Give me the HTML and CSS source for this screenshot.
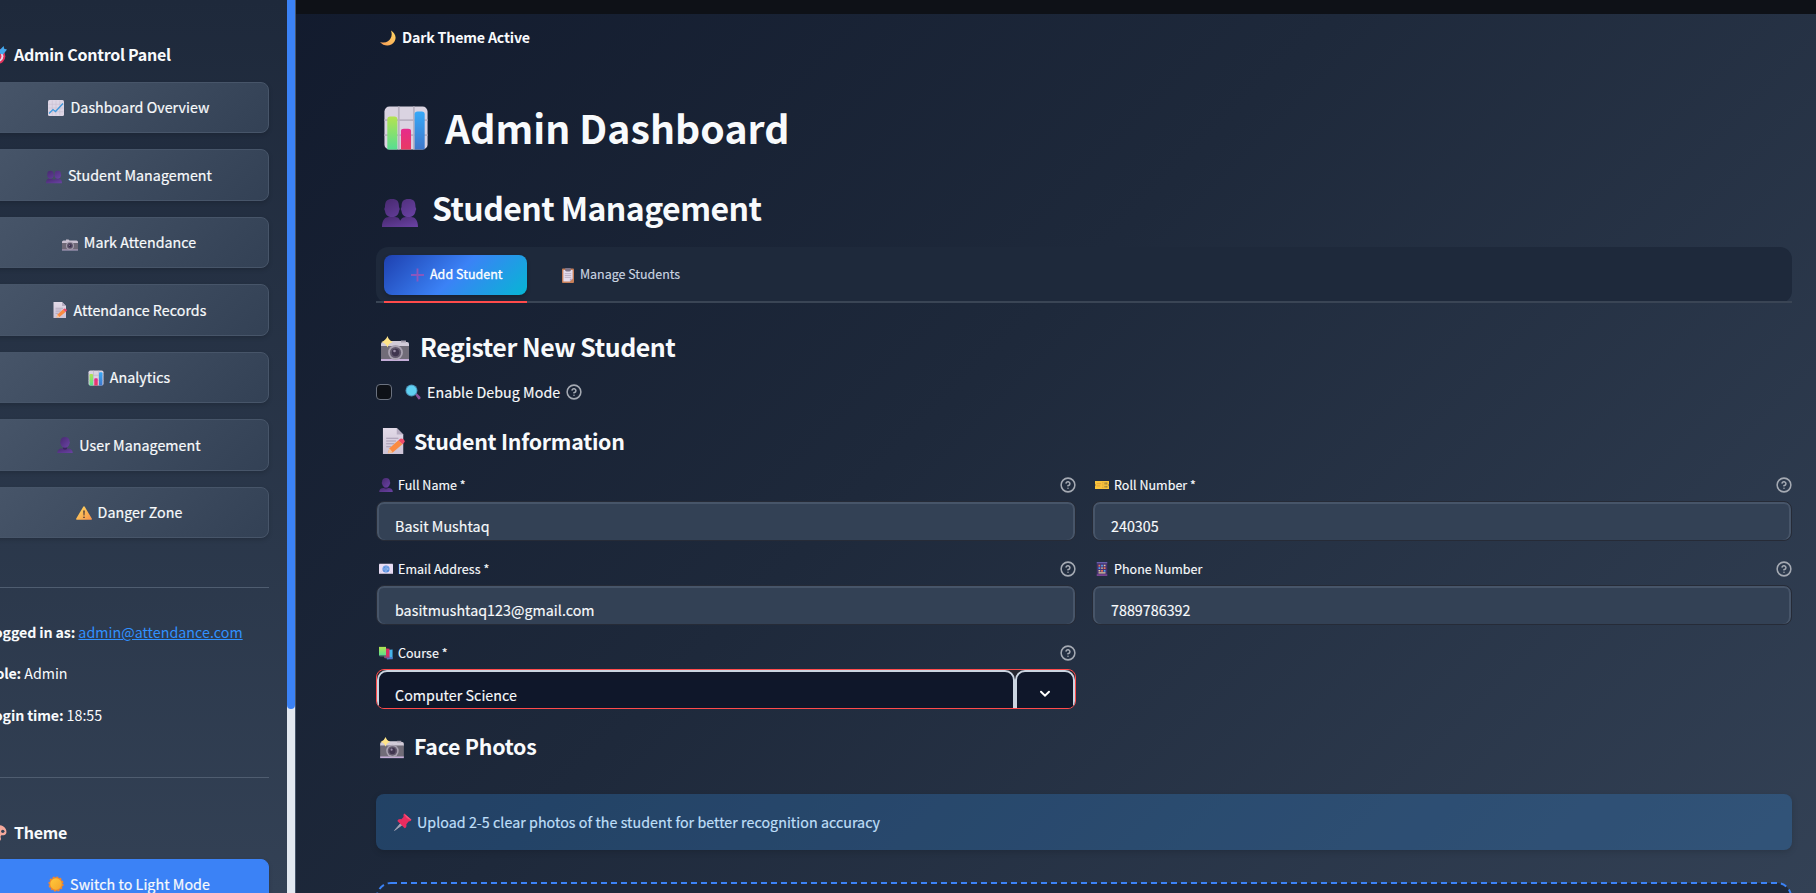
FILE: index.html
```html
<!DOCTYPE html>
<html lang="en">
<head>
<meta charset="utf-8">
<title>Admin Dashboard</title>
<link rel="stylesheet" href="styles.css">
</head>
<body>
<svg class="defs" width="0" height="0" aria-hidden="true">
  <defs>
    <linearGradient id="g-green" x1="0" y1="0" x2="0" y2="1"><stop offset="0" stop-color="#b4e34f"/><stop offset="1" stop-color="#56de92"/></linearGradient>
    <linearGradient id="g-pink" x1="0" y1="0" x2="0" y2="1"><stop offset="0" stop-color="#e62b8c"/><stop offset="1" stop-color="#e83a62"/></linearGradient>
    <linearGradient id="g-blue" x1="0" y1="0" x2="0" y2="1"><stop offset="0" stop-color="#37a9f8"/><stop offset="1" stop-color="#3f77cb"/></linearGradient>
    <linearGradient id="g-paper" x1="0" y1="0" x2="0" y2="1"><stop offset="0" stop-color="#e2dae8"/><stop offset="1" stop-color="#cdc3d6"/></linearGradient>
    <linearGradient id="g-purple" x1="0" y1="0" x2="1" y2="1"><stop offset="0" stop-color="#47296f"/><stop offset="1" stop-color="#6b43a5"/></linearGradient>
    <linearGradient id="g-gold" x1="0" y1="0" x2="1" y2="1"><stop offset="0" stop-color="#ffdd60"/><stop offset="1" stop-color="#f8934c"/></linearGradient>
    <linearGradient id="g-sun" x1="0" y1="0" x2="1" y2="1"><stop offset="0" stop-color="#ffc93a"/><stop offset="1" stop-color="#f5a52c"/></linearGradient>
    <linearGradient id="g-moon" x1="1" y1="0" x2="0" y2="1"><stop offset="0" stop-color="#ffd862"/><stop offset="1" stop-color="#f79b55"/></linearGradient>
    <symbol id="bars" viewBox="0 0 32 32">
      <rect x="1" y="1" width="30" height="30" rx="3.5" fill="#dad3e1"/>
      <path d="M11 1v30M21.500 1v30M1 10.500h30M1 21h30" stroke="#b9b1c1" stroke-width="1.200"/>
      <path d="M3 31V10q0-2 2-2h3q2 0 2 2v21z" fill="url(#g-green)"/>
      <path d="M12.500 31V18q0-1.500 2-1.500h3q2 0 2 1.500v13z" fill="url(#g-pink)"/>
      <path d="M22 31V6.500q0-2 2-2h3q2 0 2 2V31z" fill="url(#g-blue)"/>
    </symbol>
    <symbol id="trend" viewBox="0 0 32 32">
      <rect x="0" y="0" width="32" height="32" rx="3" fill="#ded6e5"/>
      <path d="M8.500 1v30M16 1v30M23.500 1v30M1 8.500h30M1 16h30M1 23.500h30" stroke="#c3b9cd" stroke-width="1"/>
      <path d="M2 27l8-8 5 4L30 7" fill="none" stroke="#3f98dc" stroke-width="2.600"/>
    </symbol>
    <symbol id="person" viewBox="0 0 32 32">
      <path d="M.5 32c0-6 4-9 9-9h13c5 0 9 3 9 9z" fill="url(#g-purple)"/>
      <path d="M12 18h8v6q-4 3-8 0z" fill="#3c2361"/>
      <path d="M7 9C7 3 10 0 16 0s9 3 9 9q2 2 0 4c-1 5-4 8.500-9 8.500S8 18 7 13q-2-2 0-4z" fill="url(#g-purple)"/>
    </symbol>
    <symbol id="people" viewBox="0 0 36 28">
      <path d="M0 28c0-7 3-10 7-10h6c4 0 6 3 6 10zM17 28c0-7 3-10 7-10h5c4 0 7 3 7 10z" fill="url(#g-purple)"/>
      <path d="M3 8c0-6 2-8 7-8s7 2 7 8q1.500 2 0 4c-.6 4-3 6-7 6s-6.400-2-7-6q-1.500-2 0-4zM19.500 8c0-6 2-8 7-8s7 2 7 8q1.500 2 0 4c-.6 4-3 6-7 6s-6.400-2-7-6q-1.500-2 0-4z" fill="url(#g-purple)"/>
    </symbol>
    <symbol id="camera" viewBox="0 0 32 24">
      <path d="M3 3h5V1h5l2 2h14q3 0 3 3v3H0V6q0-3 3-3z" fill="#c9c0d0"/>
      <path d="M0 8h32v14H0z" fill="#6e6876"/><path d="M0 21h32v2H0z" fill="#b9a9ca"/>
      <circle cx="16" cy="13.500" r="8" fill="#a69dae"/><circle cx="16" cy="13.500" r="5.800" fill="#5a5266"/><circle cx="16" cy="13.500" r="3" fill="#3c3050"/><circle cx="15" cy="12.500" r="1.200" fill="#93829f"/>
    </symbol>
    <symbol id="flash" viewBox="0 0 30 26">
      <path d="M3 6h5V5h16v1h3q2 0 2 2v3H1V8q0-2 2-2z" fill="#d2cbd8"/><path d="M21 4.500h5v2h-5z" fill="#a79fae"/>
      <path d="M1 10h28v14H1z" fill="#716c78"/><path d="M1 23h28v2H1z" fill="#c4add7"/>
      <circle cx="15.500" cy="16.500" r="7.400" fill="#aaa2b1"/><circle cx="15.500" cy="16.500" r="5.600" fill="#62596d"/><circle cx="15.500" cy="16.500" r="3.700" fill="#40354f"/><circle cx="14.500" cy="15" r="1.300" fill="#9c8fa9"/>
      <path d="M7.500 0q1 4 5.500 6-4.500 1-5.500 5.500Q6 7 1.500 6 6 4 7.500 0z" fill="#ffe488"/>
    </symbol>
    <symbol id="memo" viewBox="0 0 28 32">
      <path d="M1 0h17l8 8v24H1z" fill="url(#g-paper)"/><path d="M18 0l8 8h-8z" fill="#b6acc1"/>
      <path d="M5 12.500h15M5 16h12M5 19.500h10M5 23h6" stroke="#a79bb2" stroke-width="1.300"/>
      <path d="M7 31l2-6L20 15l5 5L13 30z" fill="#fb8b42"/><path d="M20 15l3-2q4 0 5 4l-3 3z" fill="#ef4c6b"/><path d="M7 31l2-6 4 5z" fill="#f3c39b"/>
    </symbol>
    <symbol id="warn" viewBox="0 0 32 28">
      <path d="M14.500 1.500q1.500-2 3 0L31.500 25q1 2-1 2.500h-29q-2-.5-1-2.500z" fill="url(#g-gold)"/>
      <path d="M14.500 9h3l-.5 10h-2z" fill="#4d3a39"/><circle cx="16" cy="22.500" r="1.700" fill="#4d3a39"/>
    </symbol>
    <symbol id="target" viewBox="0 0 32 32">
      <circle cx="15" cy="18" r="14" fill="#e2325c"/><circle cx="15" cy="18" r="10.500" fill="#e6dcec"/><circle cx="15" cy="18" r="7" fill="#e2325c"/><circle cx="15" cy="18" r="3" fill="#e6dcec"/>
      <path d="M15 18L26 7" stroke="#3779b8" stroke-width="2"/><path d="M18 8l8-8 1 5 5 1-7 9-6-2z" fill="#45a8ee"/>
    </symbol>
    <symbol id="palette" viewBox="0 0 32 32">
      <path d="M16 2c9 0 15 5 15 12 0 6-6 6-8 6s-3 2-2 5-1 6-5 6C7 31 1 25 1 16S8 2 16 2z" fill="#f5a99c"/><circle cx="24.500" cy="13" r="3" fill="#344256"/><circle cx="9" cy="12" r="3" fill="#4aa3ed"/>
    </symbol>
    <symbol id="sun" viewBox="0 0 32 32">
      <circle cx="16" cy="16" r="13.500" fill="#f0872f" stroke="#f0872f" stroke-width="3.500" stroke-dasharray="4 3.070"/><circle cx="16" cy="16" r="11.500" fill="url(#g-sun)"/>
    </symbol>
    <symbol id="moon" viewBox="0 0 32 32"><path d="M22 1c8 5 12 14 7 22-6 10-21 11-29 1 11 3 18-1 21-7 3-5 3-10 1-16z" fill="url(#g-moon)"/></symbol>
    <symbol id="plus" viewBox="0 0 28 28"><path d="M12 0h4v12h12v4H16v12h-4V16H0v-4h12z" fill="#8a57bd"/></symbol>
    <symbol id="clip" viewBox="0 0 26 32">
      <rect x="0" y="1" width="26" height="31" rx="2" fill="#c77e58"/><path d="M3 4h20v19l-6 6H3z" fill="#e4dced"/><path d="M23 23l-6 6v-6z" fill="#b3a5c4"/>
      <path d="M7 0h12v6q-6 3-12 0z" fill="#7d7488"/><path d="M6 12h14M6 16h14M6 20h14" stroke="#aaa0b5" stroke-width="1.500"/>
    </symbol>
    <symbol id="lens" viewBox="0 0 32 32"><path d="M20 21l3-3 8 8q1 4-4 5z" fill="#8b5398"/><circle cx="13" cy="13" r="12" fill="#4a8fb4"/><circle cx="13" cy="13" r="10" fill="#5fd0f2"/></symbol>
    <symbol id="mail" viewBox="0 0 32 24"><rect width="32" height="23" rx="1" fill="#e9ddf4"/><path d="M0 23l10-9M32 23l-10-9" stroke="#cfc0de"/><circle cx="16" cy="12" r="8" fill="#4b86db"/><circle cx="16" cy="12" r="3" fill="none" stroke="#b7d2f5" stroke-width="1.500"/><path d="M19 9v4q1 3 3 0v-2a6 6 0 1 0-3 6" fill="none" stroke="#b7d2f5" stroke-width="1"/></symbol>
    <symbol id="books" viewBox="0 0 32 30"><path d="M18 8l13-1v21l-13 1z" fill="#45b4ec"/><path d="M18 25l13-1v5H18z" fill="#4b78cb"/><path d="M10 4l14 1v19l-12 1z" fill="#d92f62"/><path d="M11 23h13v4H13z" fill="#8d4c83"/><path d="M0 1h16v20H0z" fill="url(#g-green)"/><path d="M0 20h16v3H2z" fill="#4e7b6f"/></symbol>
    <symbol id="ticket" viewBox="0 0 32 20"><path d="M0 1h32v6q-2 3 0 6v6H0v-6q2-3 0-6z" fill="#fac53b"/><path d="M4 7h10M4 12h8" stroke="#d98c3b" stroke-width="1.500"/><path d="M18 3v14" stroke="#b8823b" stroke-dasharray="2 2" stroke-width="1.500"/><path d="M23 4v5M27 4v5M23 12v4M27 12v4" stroke="#71633f" stroke-width="2"/></symbol>
    <symbol id="phone" viewBox="0 0 24 32"><rect width="24" height="32" rx="1.500" fill="#45316f"/><path d="M0 0h24v3H0z" fill="#6760aa"/><path d="M0 28h24v4H0z" fill="#77458f"/><path d="M4 8h4M10 20h4M16 14h4" stroke="#ef7c55" stroke-width="4"/><path d="M10 8h4M4 14h4M16 20h4" stroke="#4fa4ed" stroke-width="4"/><path d="M16 8h4M10 14h4M4 20h4M4 25h16" stroke="#dfcaa2" stroke-width="3"/></symbol>
    <symbol id="pin" viewBox="0 0 32 32"><path d="M1 31l12-14 3 3z" fill="#a7a6b7" stroke="#a7a6b7" stroke-width="1.500"/><path d="M18 1l13 11q0 3-5 3l-4 5q1 6-3 7L6 14q1-4 7-3l4-4q-1-5 1-6z" fill="#e92c5f"/><path d="M18 1l13 11q-4 1-8-3t-5-8z" fill="#fb5276"/></symbol>
    <symbol id="help" viewBox="0 0 24 24"><g fill="none" stroke="#a5aab3" stroke-width="2.300" stroke-linecap="round" stroke-linejoin="round"><circle cx="12" cy="12" r="10.300"/><path d="M9.090 9a3 3 0 0 1 5.830 1c0 2-3 3-3 3M12 17h.01"/></g></symbol>
  </defs>
</svg>

<div class="app">
  <aside class="sidebar">
    <div class="side-body">
      <h3 class="side-title"><svg class="i18"><use href="#target"/></svg>Admin Control Panel</h3>
      <nav class="nav">
        <a class="nav-btn"><svg class="i16"><use href="#trend"/></svg>Dashboard Overview</a>
        <a class="nav-btn"><svg class="i16 low"><use href="#people"/></svg>Student Management</a>
        <a class="nav-btn"><svg class="i16 low"><use href="#camera"/></svg>Mark Attendance</a>
        <a class="nav-btn"><svg class="i16"><use href="#memo"/></svg>Attendance Records</a>
        <a class="nav-btn"><svg class="i16"><use href="#bars"/></svg>Analytics</a>
        <a class="nav-btn"><svg class="i16"><use href="#person"/></svg>User Management</a>
        <a class="nav-btn"><svg class="i16"><use href="#warn"/></svg>Danger Zone</a>
      </nav>
      <div class="session">
        <p><b>Logged in as:</b> <a class="link">admin@attendance.com</a></p>
        <p><b>Role:</b> Admin</p>
        <p><b>Login time:</b> 18:55</p>
      </div>
      <h3 class="side-title theme"><svg class="i18"><use href="#palette"/></svg>Theme</h3>
      <a class="nav-btn primary"><svg class="i16"><use href="#sun"/></svg>Switch to Light Mode</a>
    </div>
    <div class="track"><div class="thumb"></div></div>
  </aside>

  <div class="page">
    <div class="topbar"></div>
    <main class="main">
      <div class="badge"><svg class="i16"><use href="#moon"/></svg>Dark Theme Active</div>
      <h1><svg class="ic-h1"><use href="#bars"/></svg>Admin Dashboard</h1>
      <h2><svg class="ic-h2"><use href="#people"/></svg>Student Management</h2>
      <div class="tabs">
        <div class="tab active"><span class="tab-face"><svg class="ic-plus"><use href="#plus"/></svg>Add Student</span></div>
        <div class="tab"><span class="tab-face"><svg class="ic-clip"><use href="#clip"/></svg>Manage Students</span></div>
      </div>
      <h3 class="h3"><svg class="ic-h3"><use href="#flash"/></svg>Register New Student</h3>
      <div class="check"><span class="box"></span><svg class="i16"><use href="#lens"/></svg><span class="check-text">Enable Debug Mode</span><svg class="help"><use href="#help"/></svg></div>
      <h4><svg class="ic-memo"><use href="#memo"/></svg>Student Information</h4>
      <div class="form">
        <div class="field"><div class="label"><svg class="i14"><use href="#person"/></svg>Full Name *<svg class="help"><use href="#help"/></svg></div><div class="input"><span>Basit Mushtaq</span></div></div>
        <div class="field"><div class="label"><svg class="i14"><use href="#ticket"/></svg>Roll Number *<svg class="help"><use href="#help"/></svg></div><div class="input"><span>240305</span></div></div>
        <div class="field"><div class="label"><svg class="i14"><use href="#mail"/></svg>Email Address *<svg class="help"><use href="#help"/></svg></div><div class="input"><span>basitmushtaq123@gmail.com</span></div></div>
        <div class="field"><div class="label"><svg class="i14"><use href="#phone"/></svg>Phone Number<svg class="help"><use href="#help"/></svg></div><div class="input"><span>7889786392</span></div></div>
        <div class="field"><div class="label"><svg class="i14"><use href="#books"/></svg>Course *<svg class="help"><use href="#help"/></svg></div>
          <div class="select"><div class="sel-value"><span>Computer Science</span></div><div class="sel-arrow"><svg width="12" height="8" viewBox="0 0 12 8"><path d="M2 1.700l4 4 4-4" fill="none" stroke="#fff" stroke-width="2" stroke-linecap="round"/></svg></div></div></div>
      </div>
      <h4 class="faces"><svg class="ic-face"><use href="#flash"/></svg>Face Photos</h4>
      <div class="info"><svg class="ic-pin"><use href="#pin"/></svg>Upload 2-5 clear photos of the student for better recognition accuracy</div>
      <svg class="drop" width="1416" height="60" viewBox="0 0 1416 60"><rect x="1" y="1" width="1414" height="80" rx="14" fill="#1e293b" stroke="#3b82f6" stroke-width="2" stroke-dasharray="6 4"/></svg>
    </main>
  </div>
</div>
</body>
</html>
```
FILE: styles.css
```css
:root { --k: 0.89; }
* { box-sizing: border-box; }
html, body { margin: 0; height: 893px; overflow: hidden; }
body {
  font-family: "Noto Sans CJK SC", "Open Sans", sans-serif;
  font-size: calc(var(--k) * 16px);
  color: #f8fafc;
  background: linear-gradient(135deg, #0f172a 0%, #1e293b 50%, #334155 100%);
  white-space: nowrap;
}
.defs { position: absolute; }
h1, h2, h3, h4, p { margin: 0; }
svg { flex: none; display: block; }
.app { display: flex; height: 893px; }

.sidebar {
  display: flex;
  flex: none;
  width: 331px;
  margin-left: -35px;
  height: 893px;
  border-right: 1px solid #475569;
  background: linear-gradient(180deg, #1e293b, #334155);
  overflow: hidden;
}
.side-body { width: 304px; padding: 42px 0 0 24px; margin-right: 18px; flex: none; }
.track { width: 8px; height: 893px; background: #e2e8f0; flex: none; }
.thumb { height: 709px; background: #3b82f6; border-radius: 0 0 4px 4px; }
.side-title { display: flex; align-items: center; gap: 7px; height: 26px; padding-bottom: 2px; font-size: calc(var(--k) * 18px); font-weight: 600; line-height: 24px; letter-spacing: -.27px; }
.i18 { width: 18px; height: 18px; }
.i16 { width: 16px; height: 16px; }
.i14 { width: 14px; height: 14px; }
.nav { display: flex; flex-direction: column; gap: 16px; margin-top: 13.900px; }
.nav-btn {
  display: flex;
  align-items: center;
  justify-content: center;
  gap: 6px;
  height: 51.500px;
  padding-bottom: 2px;
  border: 1px solid #475569;
  border-radius: 8px;
  background: linear-gradient(135deg, #475569, #334155);
  box-shadow: 0 2px 4px rgba(0, 0, 0, .15);
  letter-spacing: .05px;
  -webkit-text-stroke: .2px;
}
.side-title svg, .nav-btn svg, .badge svg, .tab-face svg, h4 svg, .info svg { margin-top: 2px; }
.nav-btn .low { margin-top: 6px; }
.nav-btn.primary { margin-top: 13px; padding-bottom: 3px; background: #3b82f6; border-color: #3b82f6; }
.session {
  height: 191px;
  margin-top: 48.600px;
  padding-top: 32px;
  border-top: 1px solid #4f5d70;
  border-bottom: 1px solid #4f5d70;
}
.session p { height: 24px; line-height: 24px; margin: 0 0 17.300px -3px; }
.session b { letter-spacing: -.15px; }
.link { color: #3191ff; text-decoration: underline; letter-spacing: .04px; }
.theme { margin-top: 42px; }

.page { flex: 1; min-width: 0; }
.topbar { height: 14px; background: #0e1117; }
.main { padding: 12px 24px 0 80px; height: 879px; overflow: hidden; }
.badge { display: flex; align-items: center; gap: 6px; height: 24px; padding: 0 0 3px 4px; font-weight: 600; letter-spacing: -.2px; }
h1, h2, .h3, h4 { display: flex; align-items: center; font-weight: 600; }
h1 { height: 60px; margin-top: 49px; padding: 0 0 4px 7px; gap: 16px; font-size: calc(var(--k) * 44px); font-weight: 700; letter-spacing: .06px; }
.ic-h1 { width: 46px; height: 46px; margin-top: 2px; }
h2 { height: 48px; margin-top: 27px; padding: 0 0 6px 6px; gap: 14px; font-size: calc(var(--k) * 36px); letter-spacing: -.58px; }
.ic-h2 { width: 36px; height: 28px; margin-top: 11px; }
.tabs {
  position: relative;
  display: flex;
  gap: 8px;
  height: 56px;
  margin-top: 13px;
  padding: 8px 8px 0;
  border-radius: 12px;
  background: #1e293b;
  font-size: calc(var(--k) * 14px);
}
.tabs::after { content: ""; position: absolute; left: 0; right: 0; bottom: 0; height: 2px; background: #3a4555; }
.tab { height: 48px; color: #cbd5e1; -webkit-text-stroke: .15px; }
.tab-face { display: flex; align-items: center; gap: 6px; height: 40px; padding: 0 28px 2px 27px; }
.active { position: relative; z-index: 1; width: 143px; border-bottom: 2px solid #ff4b4b; color: #fff; -webkit-text-stroke: .3px; }
.active .tab-face { padding: 0 0 2px 27px; border-radius: 8px; background: linear-gradient(135deg, #1e40af, #3b82f6 50%, #06b6d4); box-shadow: 0 2px 4px rgba(0, 0, 0, .2); letter-spacing: .05px; }
.ic-plus { width: 13px; height: 14px; }
.ic-clip { width: 12px; height: 15px; }
.h3 { height: 36px; margin-top: 27px; padding: 0 0 4px 4px; gap: 10px; font-size: calc(var(--k) * 28px); letter-spacing: -.45px; }
.ic-h3 { width: 30px; height: 26px; margin-top: 6px; }
.check { display: flex; align-items: center; height: 24px; margin-top: 14px; }
.box { width: 16px; height: 16px; border: 1px solid #6b7280; border-radius: 4px; background: #0e1117; margin-right: 13px; }
.check .i16 { margin-right: 6px; }
.check-text { padding-bottom: 2px; letter-spacing: .06px; -webkit-text-stroke: .15px; }
.check .help { margin-left: 6px; }
.help { width: 16px; height: 16px; }
h4 { height: 32px; margin-top: 22px; padding: 0 0 4px 6px; gap: 9px; font-size: calc(var(--k) * 24px); letter-spacing: -.25px; }
.ic-memo { width: 23px; height: 26px; }
.form { display: grid; grid-template-columns: 700px 700px; column-gap: 16px; margin-top: 17px; }
.field { height: 84px; }
.label { display: flex; align-items: center; gap: 5px; height: 20px; padding-left: 3px; font-size: calc(var(--k) * 14px); letter-spacing: .05px; -webkit-text-stroke: .15px; }
.label .help { margin-left: auto; }
.input {
  height: 40px;
  margin-top: 6px;
  border: 1px solid #262b37;
  border-radius: 8px;
  background: #334155;
  box-shadow: inset 0 2px #475569, inset 2px 0 #475569, inset -2px 0 #475569;
  padding: 12px 18px 0;
}
.input span, .sel-value span { display: block; line-height: 24px; letter-spacing: .05px; -webkit-text-stroke: .15px; }
.select { display: flex; height: 40px; margin-top: 6px; border: 1px solid #ff4b4b; border-radius: 8px; background: #262730; overflow: hidden; }
.sel-value, .sel-arrow { height: 48px; border: 2px solid #cbd5e1; border-radius: 10px; background: #0f172a; }
.sel-value { width: 638px; padding: 11px 16px 0; }
.sel-arrow { flex: 1; display: flex; justify-content: center; padding-top: 18px; }
h4.faces { margin-top: 5px; padding: 0 0 6px 3px; gap: 9px; }
h4 .ic-face { width: 26px; height: 22px; margin-top: 6px; }
.info {
  display: flex;
  align-items: center;
  gap: 5px;
  height: 56px;
  margin-top: 30px;
  padding: 0 0 2px 18px;
  border-radius: 8px;
  background: rgba(49, 130, 206, .3);
  box-shadow: 0 2px 6px rgba(0, 0, 0, .15);
  color: #bfdff8;
  letter-spacing: .05px;
  -webkit-text-stroke: .2px;
}
.ic-pin { width: 18px; height: 18px; }
.drop { margin-top: 32px; }
```
